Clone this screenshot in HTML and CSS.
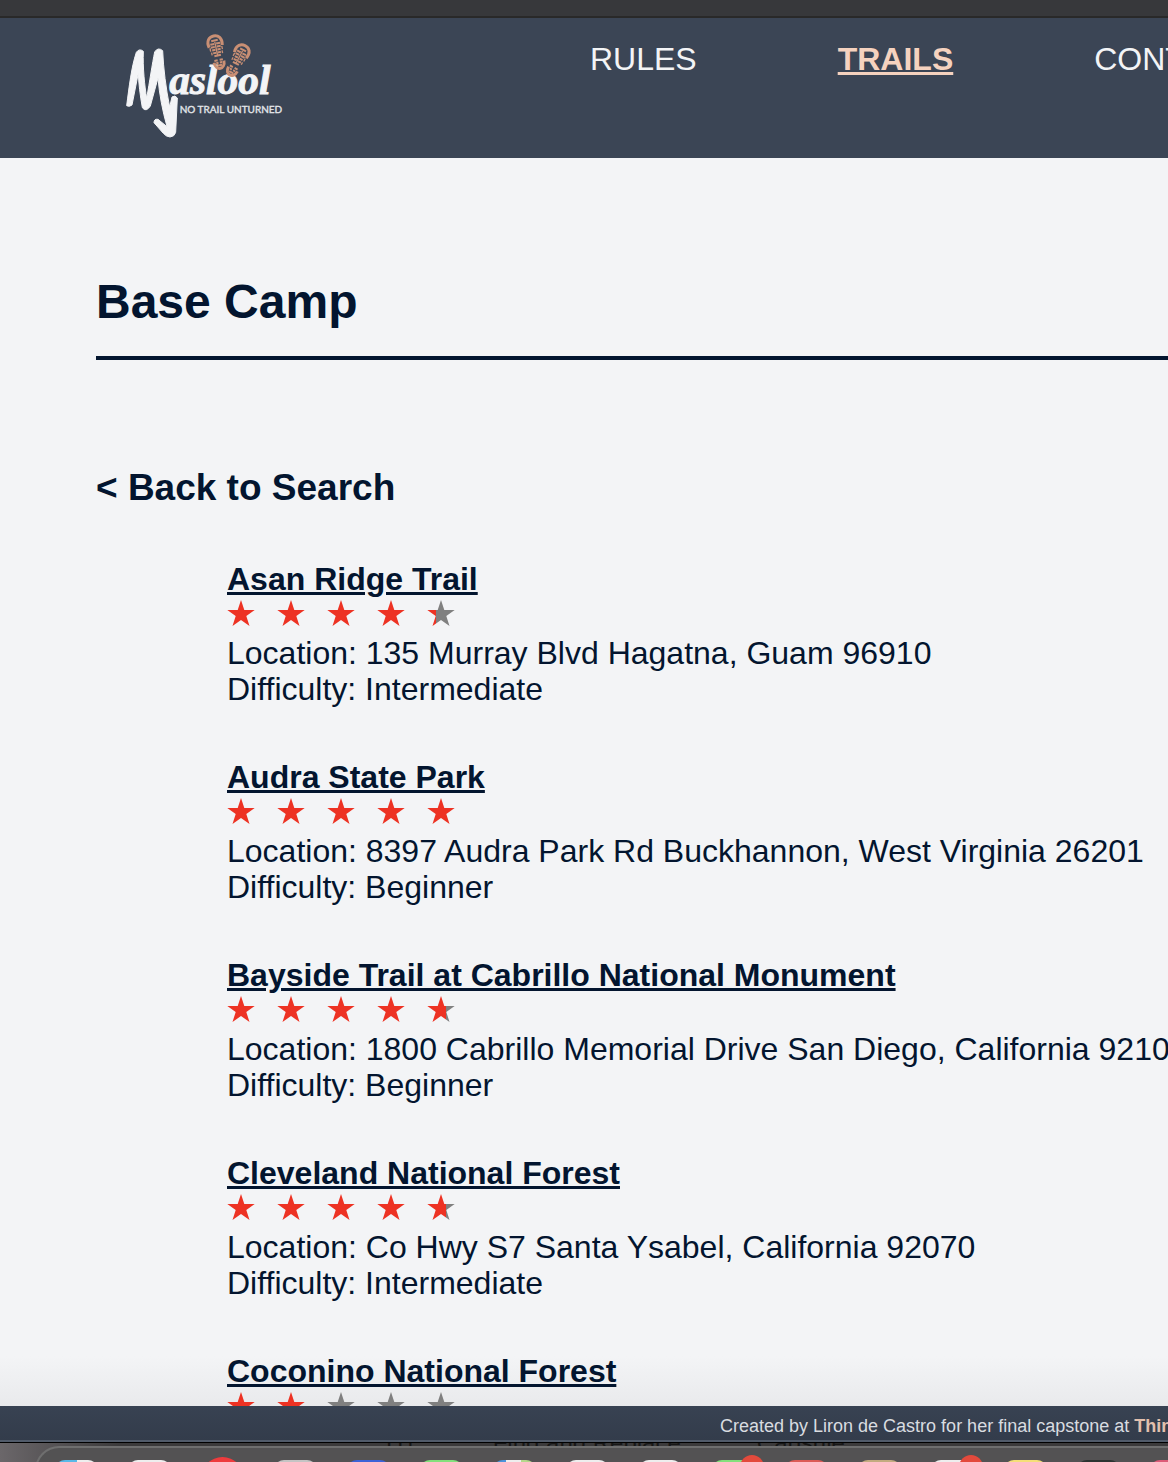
FILE: index.html
```html
<!DOCTYPE html>
<html lang="en">
<head>
<meta charset="utf-8">
<meta name="viewport" content="width=device-width, initial-scale=1">
<title>Maslool - Trails</title>
<link rel="stylesheet" href="styles.css">
</head>
<body>
<svg class="defs" aria-hidden="true">
  <defs>
    <linearGradient id="fill30"><stop offset="30%" stop-color="#ed3223"/><stop offset="30%" stop-color="#808080"/></linearGradient>
    <linearGradient id="fill70"><stop offset="70%" stop-color="#ed3223"/><stop offset="70%" stop-color="#808080"/></linearGradient>
    <path id="star" d="M14 0L17.3 9.9H27.7L19.3 16L22.5 26L14 20L5.500 26L8.700 16L.3 9.900H10.700Z"/>
    <g id="boot">
      <path d="M-20-4C-25-25-14-36 0-36S25-25 20-4" class="boot-toe"/>
      <path d="M-10-22H10M-15-12H-3M3-12H15M-15-3H-3M3-3H15M-13 6H-3M3 6H13M-12 15H-2M2 15H12M-10 24H10" class="boot-tread"/>
      <path d="M-18-2V8M-16 12V20M18-2V8M16 12V20M0-18V26" class="boot-edge"/>
      <path d="M-15 43C-15 70 15 70 15 43" class="boot-toe"/>
      <path d="M-13 38H-3M3 38H13M-9 46H-2M2 46H9M-7 54H7" class="boot-tread"/>
    </g>
  </defs>
</svg>
<div class="window-bar"></div>
<header class="header">
  <a class="logo" href="#" aria-label="Maslool, no trail unturned">
    <svg viewBox="0 0 570 390" width="190" height="130">
      <g class="mark">
        <path d="M50 257C57 204 64 141 79 97Q88 84 100 94C98 143 104 197 110 235C119 184 127 130 134 96Q144 80 158 92C160 143 168 207 179 261L186 231Q195 224 202 234L197 337Q194 350 180 351Q168 350 160 340L132 308Q132 296 144 298L171 320C157 270 148 223 144 174L121 258Q108 278 97 263C90 224 86 190 85 159L66 255Q58 262 50 257Z"/>
      </g>
      <text class="logo-name" x="178" y="222">aslool</text>
      <text class="logo-tag" x="209" y="278">NO TRAIL UNTURNED</text>
      <use href="#boot" transform="translate(318 83) rotate(-12)"/>
      <use href="#boot" transform="translate(389 109) rotate(28)"/>
    </svg>
  </a>
  <nav class="nav">
    <a href="#">RULES</a>
    <a href="#" class="active">TRAILS</a>
    <a href="#">CONTACT</a>
  </nav>
</header>
<main class="main">
  <h1>Base Camp</h1>
  <a class="back" href="#">&lt; Back to Search</a>
  <ul class="trails">
    <li>
      <h2><a href="#">Asan Ridge Trail</a></h2>
      <div class="stars" role="img" aria-label="4.3 out of 5 stars">
        <svg class="star"><use href="#star"/></svg><svg class="star"><use href="#star"/></svg><svg class="star"><use href="#star"/></svg><svg class="star"><use href="#star"/></svg><svg class="star part30"><use href="#star"/></svg>
      </div>
      <p>Location: 135 Murray Blvd Hagatna, Guam 96910</p>
      <p>Difficulty: Intermediate</p>
    </li>
    <li>
      <h2><a href="#">Audra State Park</a></h2>
      <div class="stars" role="img" aria-label="5 out of 5 stars">
        <svg class="star"><use href="#star"/></svg><svg class="star"><use href="#star"/></svg><svg class="star"><use href="#star"/></svg><svg class="star"><use href="#star"/></svg><svg class="star"><use href="#star"/></svg>
      </div>
      <p>Location: 8397 Audra Park Rd Buckhannon, West Virginia 26201</p>
      <p>Difficulty: Beginner</p>
    </li>
    <li>
      <h2><a href="#">Bayside Trail at Cabrillo National Monument</a></h2>
      <div class="stars" role="img" aria-label="4.7 out of 5 stars">
        <svg class="star"><use href="#star"/></svg><svg class="star"><use href="#star"/></svg><svg class="star"><use href="#star"/></svg><svg class="star"><use href="#star"/></svg><svg class="star part70"><use href="#star"/></svg>
      </div>
      <p>Location: 1800 Cabrillo Memorial Drive San Diego, California 92106</p>
      <p>Difficulty: Beginner</p>
    </li>
    <li>
      <h2><a href="#">Cleveland National Forest</a></h2>
      <div class="stars" role="img" aria-label="4.7 out of 5 stars">
        <svg class="star"><use href="#star"/></svg><svg class="star"><use href="#star"/></svg><svg class="star"><use href="#star"/></svg><svg class="star"><use href="#star"/></svg><svg class="star part70"><use href="#star"/></svg>
      </div>
      <p>Location: Co Hwy S7 Santa Ysabel, California 92070</p>
      <p>Difficulty: Intermediate</p>
    </li>
    <li>
      <h2><a href="#">Coconino National Forest</a></h2>
      <div class="stars" role="img" aria-label="2 out of 5 stars">
        <svg class="star"><use href="#star"/></svg><svg class="star"><use href="#star"/></svg><svg class="star empty"><use href="#star"/></svg><svg class="star empty"><use href="#star"/></svg><svg class="star empty"><use href="#star"/></svg>
      </div>
    </li>
  </ul>
</main>
<footer class="footer">
  <p>Created by Liron de Castro for her final capstone at <a href="#">Thinkful</a></p>
</footer>
<div class="desktop">
  <div class="behind"><span>H1</span><span>Find and Replace</span><span>Capsule</span></div>
  <div class="dock">
    <i class="finder"></i><i></i><i class="round"></i><i class="grey"></i><i class="blue"></i><i class="green"></i><i class="maps"></i><i></i><i></i><i class="green badge"></i><i class="red"></i><i class="tan"></i><i class="badge"></i><i class="yellow"></i><i class="dark"></i><i class="pink"></i>
  </div>
</div>
</body>
</html>
```
FILE: styles.css
```css
* { box-sizing: border-box; }

body {
  margin: 0;
  height: 100vh;
  display: flex;
  flex-direction: column;
  overflow: hidden;
  background: #f3f4f6;
  color: #03152f;
  font-family: "Liberation Sans", Arial, sans-serif;
  font-size: 32px;
  line-height: 36px;
  white-space: nowrap;
}

h1, h2, p, ul { margin: 0; padding: 0; }
a { color: inherit; text-decoration: none; }

.defs { position: absolute; width: 0; height: 0; }

.window-bar {
  flex: none;
  height: 18px;
  background: #37383b;
  border-bottom: 2px solid #292929;
}

.header {
  flex: none;
  display: flex;
  overflow: hidden;
  padding: 2px 0 8px 110px;
  background: #3b4555;
}

.logo { display: block; flex: none; height: 130px; }
.logo svg { display: block; }
.mark { fill: #f3f4f6; stroke: #f3f4f6; stroke-width: 3; }
.logo-name {
  fill: #f3f4f6;
  stroke: #f3f4f6;
  stroke-width: 3;
  font: italic bold 124px "Liberation Serif", serif;
}
.logo-tag { fill: #e3e6ea; stroke: #e3e6ea; stroke-width: 1; font: 30px Lato, sans-serif; }
.boot-toe { fill: none; stroke: #c98f74; stroke-width: 9; }
.boot-tread { fill: none; stroke: #c98f74; stroke-width: 6; }
.boot-edge { fill: none; stroke: #c98f74; stroke-width: 4; }

.nav {
  display: flex;
  gap: 141px;
  padding-top: 21px;
  margin-left: 290px;
  color: #f3f4f6;
}
.nav .active {
  color: #f5d2bf;
  font-weight: bold;
  text-decoration: underline;
}

.main {
  flex: 1;
  min-height: 0;
  overflow: hidden;
  padding: 117px 0 0 96px;
  background: linear-gradient(to top, #e9eaec, #f3f4f6 50px);
}

h1 {
  padding-bottom: 27px;
  border-bottom: 4px solid #03152f;
  font-size: 48px;
  line-height: 54px;
}

.back {
  display: block;
  margin-top: 106px;
  font-size: 37px;
  line-height: 44px;
  font-weight: bold;
}

.trails {
  display: flex;
  flex-direction: column;
  gap: 52px;
  margin: 51px 0 0 131px;
  list-style: none;
}
.trails h2 { font-size: 32px; line-height: 36px; }
.trails h2 a { text-decoration: underline; }

.stars {
  display: flex;
  gap: 22px;
  height: 38px;
  padding-top: 3px;
}
.star { flex: none; width: 28px; height: 26px; fill: #ed3223; }
.part30 { fill: url(#fill30); }
.part70 { fill: url(#fill70); }
.empty { fill: #808080; }

.footer {
  flex: none;
  height: 36px;
  overflow: hidden;
  padding: 10px 0 0 720px;
  background: linear-gradient(#384252, #333c4b);
  border-bottom: 2px solid #515b6a;
  color: #d9dce0;
  font-size: 18px;
  line-height: 20px;
}
.footer a { color: #e2c0ae; font-weight: bold; }

.desktop {
  flex: none;
  height: 20px;
  overflow: hidden;
  border-top: 1px solid #000;
  background: linear-gradient(to right, #6b676a, #3b3a3b 120px);
}
.behind {
  display: flex;
  gap: 76px;
  height: 3px;
  padding-left: 386px;
  overflow: hidden;
  color: #171717;
  font-size: 24px;
  line-height: 0;
}
.dock {
  display: flex;
  gap: 30px;
  height: 60px;
  margin-left: 35px;
  padding: 12px 0 0 18px;
  overflow: hidden;
  background: #535253;
  border: 2px solid #6f6f6f;
  border-right: 0;
  border-radius: 24px 0 0 0;
}
.dock i {
  position: relative;
  flex: none;
  width: 43px;
  height: 43px;
  border-radius: 10px;
  background: #eee;
}
.dock .finder { background: linear-gradient(to right, #59b9e8 50%, #eee 50%); }
.dock .round { margin-top: -3px; border-radius: 50%; background: #ee3b3d; }
.dock .grey { background: #c5c4c4; }
.dock .blue { background: #3c62d8; }
.dock .green { background: #83e07c; }
.dock .maps { background: linear-gradient(to right, #4a94dc 30%, #eee 30% 65%, #b5d88b 65%); }
.dock .red { background: #dc5b56; }
.dock .tan { background: #c3ab80; }
.dock .yellow { background: #f5df78; }
.dock .dark { background: #2c3331; }
.dock .pink { background: #dd5b78; }
.dock .badge::after {
  content: "";
  position: absolute;
  top: -5px;
  right: -9px;
  width: 24px;
  height: 24px;
  border-radius: 50%;
  background: #e34a3c;
}
```
